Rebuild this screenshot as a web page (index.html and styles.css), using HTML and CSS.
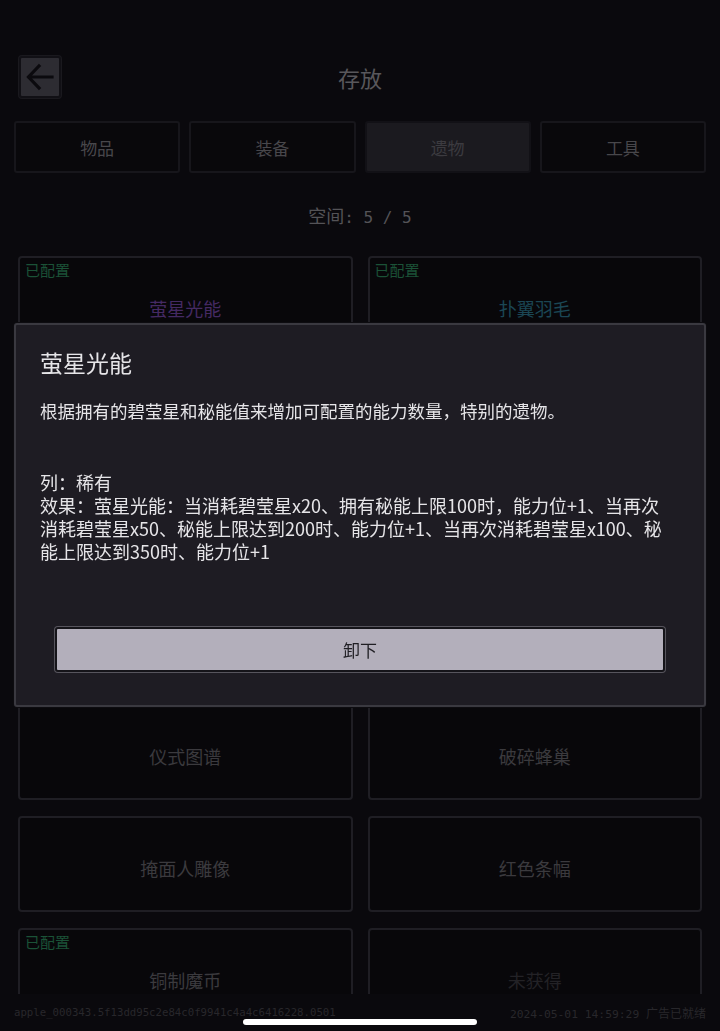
FILE: index.html
```html
<!DOCTYPE html>
<html lang="zh">
<head>
<meta charset="utf-8">
<title>存放</title>
<link rel="stylesheet" href="styles.css">
</head>
<body>
<div class="page">
  <div class="header">
    <div class="back">
      <svg width="30" height="28" viewBox="0 0 30 28"><path d="M27 14H4M14 3L3.5 14L14 25" fill="none" stroke="#0b0a0e" stroke-width="3.2" stroke-linecap="square"/></svg>
    </div>
    <div class="title">存放</div>
    <div></div>
  </div>
  <div class="tabs">
    <div class="tab">物品</div>
    <div class="tab">装备</div>
    <div class="tab active">遗物</div>
    <div class="tab">工具</div>
  </div>
  <div class="space">空间<span class="mono">: 5 / 5</span></div>
  <div class="grid-wrap">
    <div class="grid">
      <div class="card"><div class="tag">已配置</div><div class="name purple">萤星光能</div></div>
      <div class="card"><div class="tag">已配置</div><div class="name teal">扑翼羽毛</div></div>
      <div class="card"><div class="name">古老罗盘</div></div>
      <div class="card"><div class="name">星辰碎片</div></div>
      <div class="card"><div class="name">银质怀表</div></div>
      <div class="card"><div class="name">破损面具</div></div>
      <div class="card"><div class="name">水晶吊坠</div></div>
      <div class="card"><div class="name">黑曜石环</div></div>
      <div class="card"><div class="name">仪式图谱</div></div>
      <div class="card"><div class="name">破碎蜂巢</div></div>
      <div class="card"><div class="name">掩面人雕像</div></div>
      <div class="card"><div class="name">红色条幅</div></div>
      <div class="card"><div class="tag">已配置</div><div class="name">铜制魔币</div></div>
      <div class="card"><div class="name dim">未获得</div></div>
    </div>
  </div>
  <div class="footer">
    <span class="mono">apple_000343.5f13dd95c2e84c0f9941c4a4c6416228.0501</span>
    <span class="right"><span class="mono">2024-05-01 14:59:29 </span>广告已就绪</span>
  </div>
</div>

<div class="modal">
  <div class="m-title">萤星光能</div>
  <div class="m-desc">根据拥有的碧莹星和秘能值来增加可配置的能力数量，特别的遗物。</div>
  <div class="m-info">
    <div>列：稀有</div>
    <div>效果：萤星光能：当消耗碧莹星x20、拥有秘能上限100时，能力位+1、当再次消耗碧莹星x50、秘能上限达到200时、能力位+1、当再次消耗碧莹星x100、秘能上限达到350时、能力位+1</div>
  </div>
  <div class="m-btn">卸下</div>
</div>

<div class="home-bar"></div>
</body>
</html>
```

FILE: styles.css
```css
* { box-sizing: border-box; }
html, body {
  margin: 0;
  padding: 0;
  background: #0a090d;
  font-family: "Noto Sans CJK SC", "Noto Sans", sans-serif;
  width: 720px;
  height: 1031px;
  overflow: hidden;
}
.mono { font-family: "DejaVu Sans Mono", "Liberation Mono", monospace; }
.page {
  padding-top: 56px;
  display: flex;
  flex-direction: column;
  height: 1031px;
}
.header {
  display: grid;
  grid-template-columns: 1fr auto 1fr;
  align-items: center;
  padding: 0 19px;
  height: 42px;
}
.back {
  width: 42px;
  height: 42px;
  background: #2d2c32;
  border: 2px solid #111015;
  border-radius: 3px;
  box-shadow: 0 0 0 1px #1a191e;
  display: flex;
  align-items: center;
  justify-content: center;
}
.title {
  color: #58575b;
  font-size: 22px;
  line-height: 30px;
}
.tabs {
  margin-top: 23px;
  padding: 0 14px;
  display: grid;
  grid-template-columns: repeat(4, 1fr);
  gap: 9px;
}
.tab {
  height: 52px;
  border: 2px solid #17161b;
  border-radius: 3px;
  background: #09080b;
  color: #48474b;
  font-size: 17px;
  display: flex;
  align-items: center;
  justify-content: center;
}
.tab.active {
  background: #1b1a1f;
  color: #3c3b40;
  border-color: #121116;
}
.space {
  margin-top: 29px;
  text-align: center;
  color: #545357;
  font-size: 18px;
  line-height: 26px;
}
.space .mono { font-size: 16px; }
.grid-wrap {
  margin-top: 25px;
  height: 738px;
  overflow: hidden;
  padding: 0 18px;
}
.grid {
  display: grid;
  grid-template-columns: 1fr 1fr;
  column-gap: 15px;
  row-gap: 16px;
}
.card {
  position: relative;
  height: 96px;
  border: 2px solid #1f1e24;
  border-radius: 4px;
  background: #08070a;
  display: flex;
  align-items: center;
  justify-content: center;
}
.tag {
  position: absolute;
  left: 5px;
  top: 2px;
  font-size: 15px;
  color: #1b5237;
  line-height: 20px;
}
.name {
  margin-top: 8px;
  font-size: 18px;
  color: #3b3a3e;
}
.name.purple { color: #452a63; }
.name.teal { color: #1b4654; }
.name.dim { color: #232226; }
.footer {
  flex: 1;
  display: flex;
  justify-content: space-between;
  align-items: flex-start;
  padding: 12px 14px 0;
  font-size: 12px;
  color: #28272b;
  line-height: 14px;
}
.footer .mono { font-size: 10.7px; }
.footer .right .mono { font-size: 11.3px; }
.modal {
  position: fixed;
  left: 14px;
  top: 323px;
  width: 692px;
  height: 384px;
  background: #1e1c23;
  border: 2px solid #3a3940;
  border-radius: 3px;
  box-shadow: 0 0 0 1px #0d0c10;
  padding: 22px 38px 0 24px;
  color: #e6e5e8;
}
.m-title {
  font-size: 23px;
  line-height: 30px;
}
.m-desc {
  margin-top: 22px;
  font-size: 17.5px;
  line-height: 23px;
}
.m-info {
  margin-top: 49px;
  font-size: 18px;
  line-height: 23px;
}
.m-btn {
  margin: 64px 0 0 15px;
  width: 610px;
  height: 45px;
  background: #b3afbb;
  border: 2px solid #151419;
  border-radius: 3px;
  box-shadow: 0 0 0 1px #57555d;
  color: #1f1e23;
  font-size: 17px;
  display: flex;
  align-items: center;
  justify-content: center;
}
.home-bar {
  position: fixed;
  left: 243px;
  top: 1019px;
  width: 234px;
  height: 6px;
  border-radius: 3px;
  background: #ffffff;
}
```
